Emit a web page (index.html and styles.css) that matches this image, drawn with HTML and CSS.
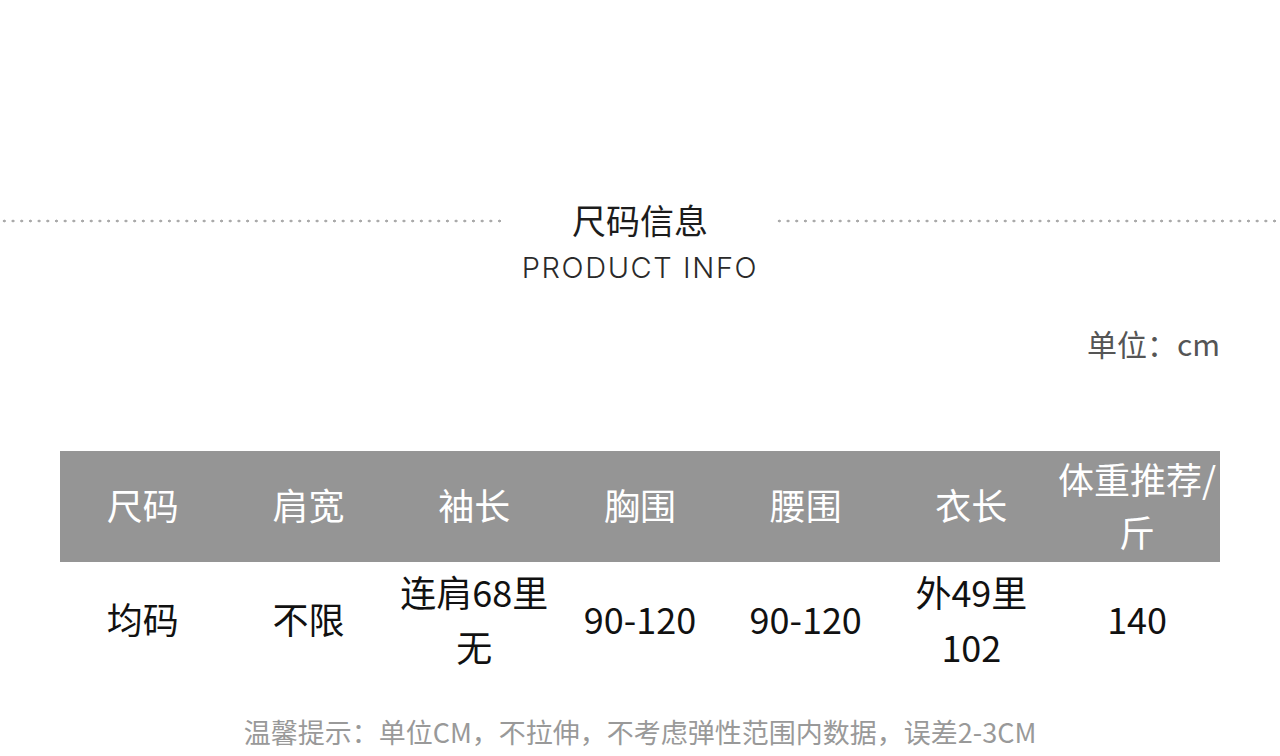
FILE: index.html
```html
<!DOCTYPE html>
<html lang="zh-CN">
<head>
<meta charset="UTF-8">
<title>尺码信息</title>
<link rel="stylesheet" href="styles.css">
</head>
<body>
<div class="page">
    <div class="title-row">
        <div class="dots"></div>
        <div class="title">
            <h1>尺码信息</h1>
            <p class="sub">PRODUCT INFO</p>
        </div>
        <div class="dots"></div>
    </div>

    <div class="wrap">
        <div class="unit">单位：cm</div>
        <table class="size-table">
            <thead>
                <tr>
                    <th>尺码</th>
                    <th>肩宽</th>
                    <th>袖长</th>
                    <th>胸围</th>
                    <th>腰围</th>
                    <th>衣长</th>
                    <th>体重推荐/斤</th>
                </tr>
            </thead>
            <tbody>
                <tr>
                    <td>均码</td>
                    <td>不限</td>
                    <td>连肩68里无</td>
                    <td>90-120</td>
                    <td>90-120</td>
                    <td>外49里102</td>
                    <td>140</td>
                </tr>
            </tbody>
        </table>
        <p class="tip">温馨提示：单位CM，不拉伸，不考虑弹性范围内数据，误差2-3CM</p>
    </div>
</div>
</body>
</html>
```

FILE: styles.css
```css
body {
    margin: 0;
    background-color: #fff;
    font-family: "Noto Sans CJK SC", "Noto Sans", sans-serif;
    color: #222;
}
.page {
    width: 1280px;
    height: 756px;
    overflow: hidden;
}
.title-row {
    display: flex;
    align-items: flex-start;
    padding-top: 200px;
}
.dots {
    flex: 1;
    height: 4px;
    margin-top: 19px;
    background-image: radial-gradient(circle, #aaa 1.2px, transparent 1.7px);
    background-size: 8.7px 4px;
    background-repeat: repeat-x;
}
.title {
    width: 270px;
    text-align: center;
}
.title h1 {
    margin: 0;
    font-size: 34px;
    font-weight: 400;
    line-height: 40px;
    color: #1c1c1c;
}
.title .sub {
    margin: 11px 0 0;
    font-family: "Inter", "DejaVu Sans", sans-serif;
    font-weight: 300;
    font-size: 29px;
    line-height: 34px;
    letter-spacing: 1.6px;
    color: #2a2a2a;
}
.wrap {
    width: 1160px;
    margin: 0 auto;
}
.unit {
    margin-top: 41px;
    text-align: right;
    font-size: 30px;
    line-height: 34px;
    color: #555;
}
.size-table {
    width: 100%;
    margin-top: 91px;
    border-collapse: collapse;
    table-layout: fixed;
}
.size-table th {
    height: 107px;
    padding: 0 0 4px;
    background-color: #959595;
    color: #fff;
    font-size: 36px;
    font-weight: 400;
    line-height: 53px;
}
.size-table td {
    height: 113px;
    padding: 0 6px 3px;
    text-align: center;
    font-size: 36px;
    line-height: 55px;
    color: #111;
}
.tip {
    margin: 37px 0 0;
    text-align: center;
    font-size: 27px;
    line-height: 34px;
    color: #999;
}
```
